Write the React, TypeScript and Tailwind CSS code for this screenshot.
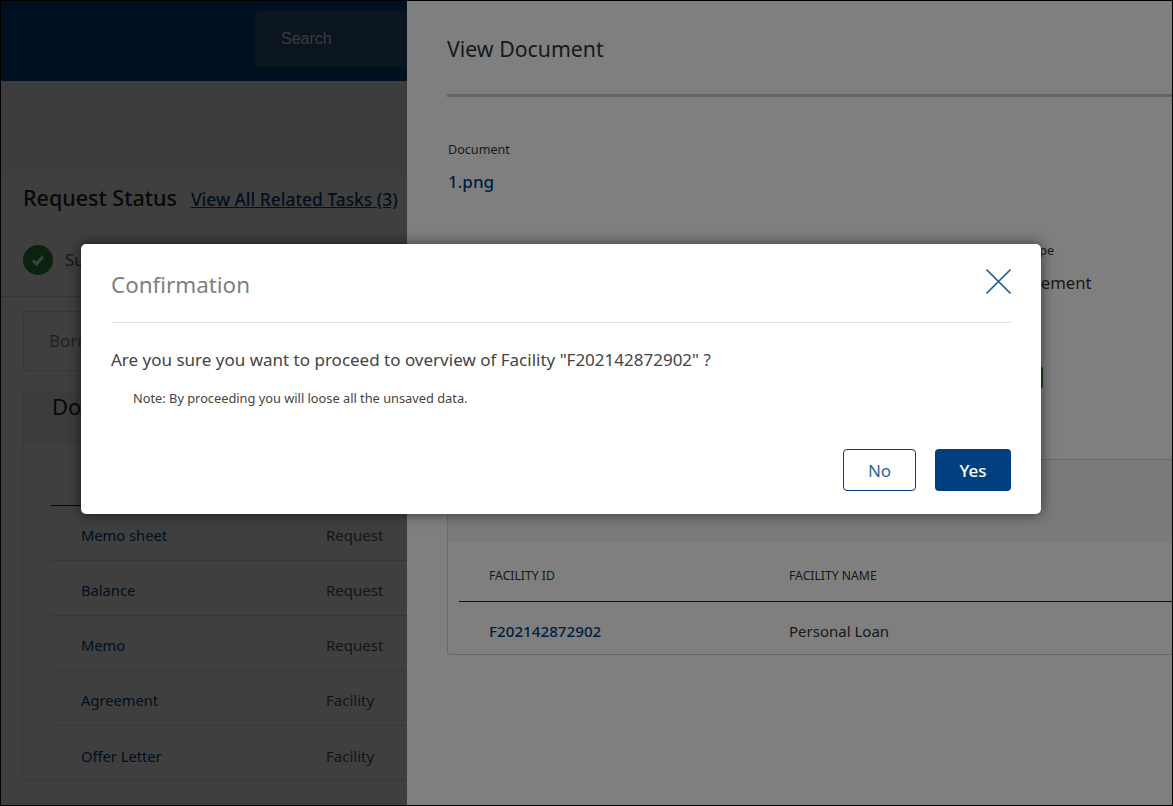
const font = { fontFamily: '"Noto Sans", sans-serif' };

const documents = [
  { name: "Memo sheet", level: "Request" },
  { name: "Balance", level: "Request" },
  { name: "Memo", level: "Request" },
  { name: "Agreement", level: "Facility" },
  { name: "Offer Letter", level: "Facility" },
];

export default function App() {
  return (
    <div className="relative flex h-[806px] w-[1173px] overflow-hidden border border-black bg-white text-[#333]" style={font}>
      {/* Page behind the drawer */}
      <div className="relative w-[406px] shrink-0 overflow-hidden">
        <header className="h-[80px] bg-[#004080] pl-[254px] pt-[10px]">
          <div className="flex h-[56px] w-full items-center rounded-l bg-[#2c5580] pl-[26px] text-[16px] text-[#e8e8e8] [font-family:'Liberation_Sans']">
            Search
          </div>
        </header>
        <div className="h-[94px] bg-[#f4f4f4]" />
        <div className="flex items-baseline gap-[14px] whitespace-nowrap pl-[22px] pt-[9px] leading-[28px]">
          <span className="text-[21.5px] font-medium text-[#222]">Request Status</span>
          <span className="text-[17.4px] font-medium text-[#004080] underline">View All Related Tasks (3)</span>
        </div>
        <div className="mt-[32px] flex items-center gap-[12px] border-b border-[#d8d8d8] pb-[21px] pl-[22px]">
          <span className="flex h-[30px] w-[30px] items-center justify-center rounded-full bg-[#2e8b3d]">
            <svg viewBox="0 0 16 16" className="h-[16px] w-[16px]" fill="none" stroke="white" strokeWidth="3">
              <path d="M3 8.5l3.5 3.5L13 4.5" />
            </svg>
          </span>
          <span className="text-[17px] text-[#555]">Successful</span>
        </div>
        <div className="mx-[22px] mt-[14px] flex h-[60px] items-center rounded border border-[#ddd] pl-[25px] text-[17px] text-[#888]">
          Borrower
        </div>
        <section className="ml-[21px] mt-[20px] h-[390px] w-[500px] rounded-b border border-t-0 border-[#ddd]">
          <div className="h-[54px] bg-[#f0f3f5] pl-[29px] pt-[1px] text-[22px] leading-[28px] text-[#222]">Documents</div>
          <div className="ml-[28px] h-[61px] border-b border-[#222]" />
          {documents.map((doc) => (
            <div key={doc.name} className="ml-[28px] flex h-[55px] items-center border-b border-[#ddd] pt-[5px] text-[15px] last:border-b-0">
              <span className="w-[275px] pl-[30px] text-[14.7px] text-[#004080]">{doc.name}</span>
              <span className="text-[#555]">{doc.level}</span>
            </div>
          ))}
        </section>
        <div className="absolute inset-0 bg-black/50" />
      </div>

      {/* View Document drawer */}
      <aside className="flex-1 bg-white pl-[40px]">
        <h2 className="pt-[32px] text-[21.3px] leading-[32px]">View Document</h2>
        <div className="mt-[29px] h-[3px] bg-[#c8c8c8]" />
        <div className="mt-[44px] pl-[1px] text-[12.6px] leading-[18px]">Document</div>
        <div className="mt-[12px] pl-[1px] text-[17px] font-medium leading-[22px] text-[#004080]">1.png</div>
        <div className="ml-[514px] whitespace-nowrap">
          <div className="mt-[49px] text-[12.6px] leading-[18px]">Document Type</div>
          <div className="mt-[10px] text-[16.7px] leading-[26px]">Loan Agreement</div>
          <div className="mt-[70px] h-[23px] w-[82px] rounded bg-[#2e8b3d]" />
        </div>
        <section className="mt-[70px] rounded-bl border border-r-0 border-[#d5d5d5]">
          <div className="h-[82px] bg-[#f2f5f7]" />
          <div className="ml-[11px] flex h-[60px] items-center border-b border-[#222] pl-[30px] pt-[10px] text-[12.2px] uppercase">
            <span className="w-[300px]">Facility ID</span>
            <span>Facility Name</span>
          </div>
          <div className="flex h-[52px] items-center pl-[41px] pt-[6px] text-[15px]">
            <span className="w-[300px] text-[15.2px] font-medium text-[#004080]">F202142872902</span>
            <span>Personal Loan</span>
          </div>
        </section>
      </aside>

      {/* Confirmation modal */}
      <div className="absolute inset-0 flex items-start bg-black/50 pl-[80px] pt-[243px]">
        <div className="h-[270px] w-[960px] rounded-[5px] bg-white px-[30px] shadow-[0_0_14px_rgba(0,0,0,0.6)]">
          <div className="flex h-[79px] items-center justify-between border-b border-[#e2e2e2]">
            <span className="pt-[4px] text-[22.4px] text-[#808080]">Confirmation</span>
            <svg viewBox="0 0 25 25" className="mb-[3px] h-[25px] w-[25px]" fill="none" stroke="#2f6496" strokeWidth="1.6">
              <path d="M0.5 0.5l24 24M24.5 0.5l-24 24" />
            </svg>
          </div>
          <p className="mt-[24px] text-[17px] leading-[26px] text-[#444]">
            Are you sure you want to proceed to overview of Facility "F202142872902" ?
          </p>
          <p className="mt-[16px] pl-[22px] text-[12.8px] leading-[18px] text-[#444]">
            Note: By proceeding you will loose all the unsaved data.
          </p>
          <div className="mt-[42px] flex justify-end gap-[19px]">
            <button className="h-[42px] w-[73px] rounded border border-[#004080] pt-[1px] text-[17px] text-[#2f6496]">No</button>
            <button className="h-[42px] w-[76px] rounded bg-[#004080] pt-[1px] text-[17px] font-medium text-white">Yes</button>
          </div>
        </div>
      </div>
    </div>
  );
}
